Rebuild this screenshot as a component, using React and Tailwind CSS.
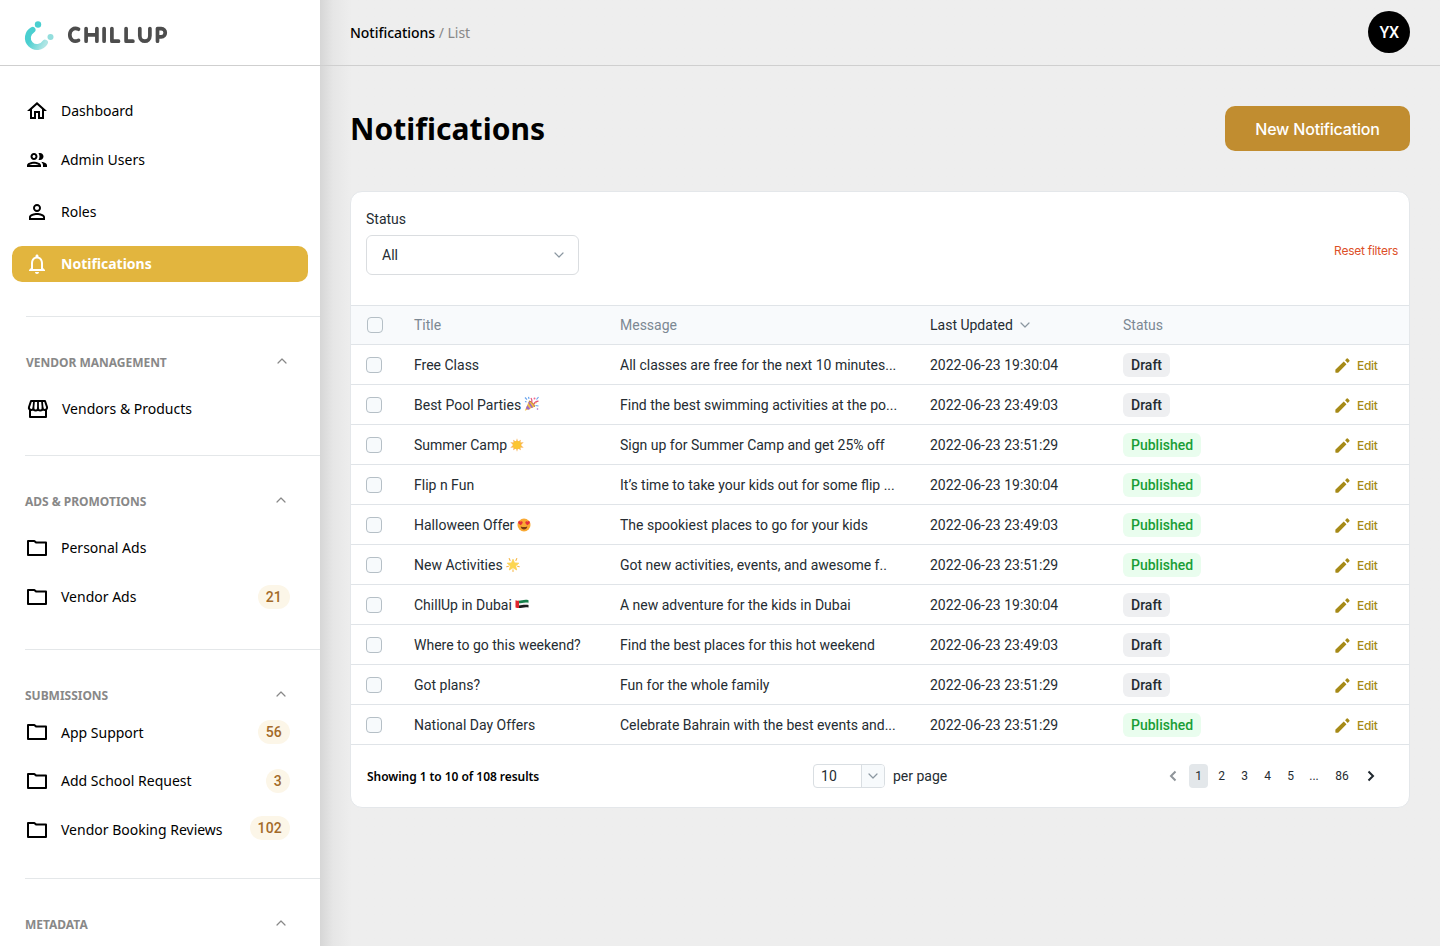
import { MdOutlineHome, MdPersonOutline, MdNotificationsNone } from "react-icons/md";

const sans = "font-['Noto_Sans',sans-serif]";

function Chevron({ up, className }) {
  return (
    <svg viewBox="0 0 10 6" className={className} fill="none" stroke="currentColor" strokeWidth="1.2" strokeLinecap="round" strokeLinejoin="round">
      <path d={up ? "M1 5l4-4 4 4" : "M1 1l4 4 4-4"} />
    </svg>
  );
}

function Group({ className }) {
  return (
    <svg viewBox="0 0 24 24" className={className} fill="currentColor">
      <path d="M9 13.750c-2.340 0-7 1.170-7 3.500V19h14v-1.750c0-2.330-4.660-3.500-7-3.500zM4.340 17c.84-.58 2.870-1.250 4.660-1.250s3.820.67 4.660 1.250H4.340zM9 12c1.930 0 3.500-1.570 3.500-3.500S10.930 5 9 5 5.500 6.570 5.500 8.500 7.070 12 9 12zm0-5c.83 0 1.500.67 1.500 1.500S9.830 10 9 10s-1.500-.67-1.500-1.500S8.170 7 9 7zm7.040 6.810c1.160.84 1.960 1.960 1.960 3.440V19h4v-1.750c0-2.020-3.500-3.170-5.960-3.440zM15 12c1.930 0 3.500-1.570 3.500-3.500S16.930 5 15 5c-.54 0-1.040.13-1.500.35.63.89 1 1.980 1 3.150s-.37 2.260-1 3.150c.46.22.96.35 1.500.35z" />
    </svg>
  );
}

function Folder({ className }) {
  return (
    <svg viewBox="0 0 24 24" className={className} fill="none" stroke="currentColor" strokeWidth="2" strokeLinejoin="round">
      <path d="M3 5h6.300l2 1.600H21V19H3z" />
    </svg>
  );
}

function Storefront({ className }) {
  return (
    <svg viewBox="0 0 24 24" className={className} fill="none" stroke="currentColor" strokeWidth="2" strokeLinejoin="round">
      <path d="M5 4h14l2 6a2.2 2.2 0 0 1-4.4 1.2A2.3 2.3 0 0 1 12 11.2a2.3 2.3 0 0 1-4.6 0A2.2 2.2 0 0 1 3 10z" />
      <path d="M8 4l-.6 7M12 4v7M16 4l.6 7" strokeWidth="1.8" />
      <path d="M4 12.5V20h16v-7.5" />
    </svg>
  );
}

function Pencil() {
  return (
    <svg viewBox="0 0 24 24" className="size-[19px]" fill="currentColor">
      <path d="M3 17.460v3.040c0 .28.22.5.5.5h3.040c.13 0 .26-.05.35-.15L17 10.400l-3.400-3.400L3.150 17.100c-.1.1-.15.22-.15.36zM20.710 6.700a1 1 0 0 0 0-1.410l-2-2a1 1 0 0 0-1.410 0l-2.100 2.100 3.400 3.400 2.110-2.090z" />
    </svg>
  );
}

function Logo() {
  return (
    <svg viewBox="0 0 150 36" className="h-9 w-[150px]">
      <defs>
        <linearGradient id="ring" x1="0" y1="0.3" x2="1" y2="0.8">
          <stop offset="0.2" stopColor="#4acfd0" />
          <stop offset="1" stopColor="#aee5e4" />
        </linearGradient>
      </defs>
      <path d="M12.600 11.800A9.200 9.200 0 1 0 25 24.500" fill="none" stroke="url(#ring)" strokeWidth="5.900" strokeLinecap="round" />
      <circle cx="18" cy="6.500" r="3.200" fill="#4acfd0" />
      <circle cx="30.500" cy="19" r="3" fill="#93dedd" />
      <g fill="none" stroke="#4d4d4d" strokeWidth="3.700" strokeLinecap="round" strokeLinejoin="round">
        <path d="M58.500 11.200C53.500 8.800 49.800 12.300 49.800 16.800S53.500 24.800 58.500 22.400" />
        <path d="M66.100 10.600v12.600M76.900 10.600v12.600M66.100 16.900h10.800M84.100 10.600v12.600M91.900 10.600v12.600h6.600M106.100 10.600v12.600h6.800" />
        <path d="M119.800 10.600v7.200c0 7.200 10.100 7.200 10.100 0v-7.200M137.500 23.200V10.600h3.700c5.400 0 5.400 8.200 0 8.200h-3.500" />
      </g>
    </svg>
  );
}

function NavItem({ icon: Icon, label, count, className, labelClass = "", active }) {
  return (
    <div className={`flex h-9 items-center ${active ? "mx-3 rounded-[10px] bg-[#e2b53e] pl-[13px] font-bold text-white" : "pl-[25px] pr-[30px] text-black"} ${className}`}>
      <Icon className="size-6 shrink-0" />
      <span className={`ml-3 text-sm ${labelClass}`}>{label}</span>
      {count && (
        <span className="ml-auto rounded-full bg-[#fcf6e8] px-2 font-[Roboto] text-sm leading-6 font-medium tracking-[.2px] text-[#a36a28]">{count}</span>
      )}
    </div>
  );
}

function Section({ title, className, children }) {
  return (
    <section className={`shrink-0 ${className}`}>
      <div className="ml-[25px] border-t border-[#e4e7e9]" />
      <div className="mt-[35px] flex h-[21px] items-center justify-between pr-[34px] pl-[25px] text-[#888]">
        <h2 className="text-xs font-bold tracking-[-.02px]">{title}</h2>
        <Chevron up className="mb-[3px] h-[6px] w-[10px]" />
      </div>
      {children}
    </section>
  );
}

function Sidebar() {
  return (
    <aside className={`flex h-full w-[320px] shrink-0 flex-col overflow-hidden bg-white ${sans}`}>
      <div className="h-[66px] shrink-0 border-b border-[#cfcfcf] pt-[18px] pl-5">
        <Logo />
      </div>
      <nav className="h-[250px] shrink-0 pt-[27px]">
        <NavItem icon={MdOutlineHome} label="Dashboard" />
        <NavItem icon={Group} label="Admin Users" className="mt-[13px]" />
        <NavItem icon={MdPersonOutline} label="Roles" className="mt-4" />
        <NavItem icon={MdNotificationsNone} label="Notifications" active className="mt-4" />
      </nav>
      <Section title="VENDOR MANAGEMENT" className="-mr-px h-[139px] pl-px">
        <NavItem icon={Storefront} label="Vendors & Products" className="mt-[18px]" />
      </Section>
      <Section title="ADS & PROMOTIONS" className="h-[194px]">
        <NavItem icon={Folder} label="Personal Ads" className="mt-[18px]" />
        <NavItem icon={Folder} label="Vendor Ads" count="21" className="mt-[13px]" />
      </Section>
      <Section title="SUBMISSIONS" className="h-[229px]">
        <NavItem icon={Folder} label="App Support" count="56" className="mt-2" labelClass="pt-[2px]" />
        <NavItem icon={Folder} label="Add School Request" count="3" className="mt-[13px]" />
        <NavItem icon={Folder} label="Vendor Booking Reviews" count="102" className="mt-[13px] [&>:last-child]:mb-[4px]" />
      </Section>
      <Section title="METADATA" className="h-[68px]" />
    </aside>
  );
}

function Party() {
  return (
    <svg viewBox="0 0 16 16" className="-mt-[2px] size-4">
      <path d="M.8 14.800L5 5c2.500.5 5 3 5.700 5.800z" fill="#f2bd45" />
      <path d="M1.800 12.500l1.500-3.300 3 3.800-1.800.7zM4.300 6.800l.8-1.600 4 6.300-1.600.6z" fill="#a06ac4" />
      <path d="M5 5c2.500.3 5.200 3 5.700 5.800" stroke="#b87a2c" fill="none" />
      <path d="M7.800 6.500c.4-2 .2-3-.8-4.500M9.800 8.200c.8-2 2-2.800 4.700-3" stroke="#e5567d" strokeWidth="1.300" fill="none" />
      <path d="M1 1.500l2 2.200M14.500 1l-2 2.500M11.500 9.500l3 .5M4.500.8l.5 2M1 5.500l1.500.3" stroke="#6aa5ee" strokeWidth="1.200" />
      <circle cx="10.500" cy="2.500" r="1" fill="#ef6c91" />
      <circle cx="13.500" cy="13" r=".8" fill="#a566c9" />
      <circle cx="12" cy="6.800" r=".7" fill="#f0b53a" />
    </svg>
  );
}

function Sun() {
  return (
    <svg viewBox="0 0 14 14" className="size-[14px]">
      <path d="M7 .3l1 3.200L10.900 1.800 10.400 4.600l3.300-.4L11 7l2.700 2.800-3.300-.4.500 2.900L8 10.600 7 13.700l-1-3.100-2.900 1.700.5-2.900-3.300.4L3 7 .3 4.200l3.300.4-.5-2.800L6 3.500z" fill="#f7a83a" opacity=".85" />
      <circle cx="7" cy="7" r="4" fill="#fbc531" />
    </svg>
  );
}

function HeartEyes() {
  return (
    <svg viewBox="0 0 14 14" className="size-[14px]">
      <circle cx="7" cy="7" r="6.500" fill="#f9a933" />
      <path d="M3.700 7.200C1.600 5.900.8 4.800 1.200 3.700 1.700 2.700 3 2.800 3.500 3.700c.8-.7 2-.4 2.200.6.100 1-.8 2-2 2.900zM10.300 7.200C12.400 5.900 13.200 4.800 12.800 3.700c-.5-1-1.800-.9-2.300 0-.8-.7-2-.4-2.200.6-.1 1 .8 2 2 2.900z" fill="#e6303a" />
      <path d="M3.700 8.500c2 .7 4.600.7 6.600 0-.3 4-6.300 4-6.600 0z" fill="#7b3a12" />
    </svg>
  );
}

function GlowingStar() {
  return (
    <svg viewBox="0 0 14 14" className="size-[14px]">
      <path d="M7 1.200l1.500 3.700 4.300.3-3.200 2.700 1.100 4.100L7 9.800l-3.700 2.200 1.100-4.100-3.200-2.700 4.300-.3z" fill="#fdd64e" stroke="#fbd054" strokeWidth=".8" strokeLinejoin="round" />
      <path d="M3.200.6l.9 1.900M10.800.6L9.900 2.500M.7 8.800l1.800-.6M13.300 8.800l-1.800-.6M7 11.800v1.700" stroke="#f6b84c" strokeWidth="1.100" strokeLinecap="round" />
    </svg>
  );
}

function UaeFlag() {
  return (
    <svg viewBox="0 0 14 10" className="-mt-[2px] h-[10px] w-[14px]">
      <path d="M.5 1.200c4 1.400 8-1.200 13 0v7.300c-5-1.200-9 1.400-13 0z" fill="#f3f3f3" />
      <path d="M3.500 1.700c3 .1 6-1.500 10-.5v2.600c-4-1-7 .6-10 .5z" fill="#16804a" />
      <path d="M3.500 6.500c3 .1 6-1.300 10-.4v2.400c-4-1-7 .8-10 .6z" fill="#1c1c1c" />
      <path d="M.5 1.200c1.200.4 2.300.5 3.500.5v7.400c-1.200 0-2.300-.2-3.500-.6z" fill="#e0262f" />
    </svg>
  );
}

const rows = [
  ["Free Class", null, "All classes are free for the next 10 minutes...", "2022-06-23 19:30:04", "Draft"],
  ["Best Pool Parties", Party, "Find the best swimming activities at the po...", "2022-06-23 23:49:03", "Draft"],
  ["Summer Camp", Sun, "Sign up for Summer Camp and get 25% off", "2022-06-23 23:51:29", "Published"],
  ["Flip n Fun", null, "It’s time to take your kids out for some flip ...", "2022-06-23 19:30:04", "Published"],
  ["Halloween Offer", HeartEyes, "The spookiest places to go for your kids", "2022-06-23 23:49:03", "Published"],
  ["New Activities", GlowingStar, "Got new activities, events, and awesome f..", "2022-06-23 23:51:29", "Published"],
  ["ChillUp in Dubai", UaeFlag, "A new adventure for the kids in Dubai", "2022-06-23 19:30:04", "Draft"],
  ["Where to go this weekend?", null, "Find the best places for this hot weekend", "2022-06-23 23:49:03", "Draft"],
  ["Got plans?", null, "Fun for the whole family", "2022-06-23 23:51:29", "Draft"],
  ["National Day Offers", null, "Celebrate Bahrain with the best events and...", "2022-06-23 23:51:29", "Published"],
];

const grid = "grid h-10 grid-cols-[48px_206px_310px_193px_1fr_76px] items-center border-b border-[#e0e4e8] pl-[15px]";

function Checkbox({ className = "" }) {
  return <span className={`block size-4 rounded border border-[#b5bfc6] bg-[#f7fafc] ${className}`} />;
}

function Arrow({ next, className }) {
  return (
    <svg viewBox="0 0 8 12" className={`h-3 w-2 ${className}`} fill="none" stroke="currentColor" strokeWidth="2">
      <path d={next ? "M1.500 1.500L6 6l-4.500 4.500" : "M6.500 1.500L2 6l4.500 4.500"} />
    </svg>
  );
}

function Footer() {
  return (
    <div className="flex h-[62px] items-center">
      <p className={`w-[462px] pt-[2px] pl-4 text-xs font-semibold tracking-[-.05px] text-black ${sans}`}>Showing 1 to 10 of 108 results</p>
      <div className="flex h-6 w-[72px] overflow-hidden rounded border border-[#d9dee2]">
        <span className="w-[47px] pl-[7px] text-sm leading-[22px] tracking-[.2px]">10</span>
        <span className="flex flex-1 items-center justify-center border-l border-[#d9dee2] bg-[#f7fafc] text-[#8b97a1]">
          <Chevron className="h-[6px] w-[10px]" />
        </span>
      </div>
      <span className="ml-2 text-sm">per page</span>
      <div className="mr-[34px] ml-auto flex items-center text-xs">
        <Arrow className="mr-3 text-[#8e9499]" />
        <span className="w-[19px] rounded bg-[#e3e7ea] text-center leading-6">1</span>
        <span className="ml-[2px] w-[23px] text-center">2</span>
        <span className="w-[23px] text-center">3</span>
        <span className="w-[23px] text-center">4</span>
        <span className="w-[23px] text-center">5</span>
        <span className="w-6 text-center">...</span>
        <span className="w-8 text-center">86</span>
        <Arrow next className="ml-[9px] text-[#1f272e]" />
      </div>
    </div>
  );
}

export default function App() {
  return (
    <div className="flex h-[946px] w-[1440px] overflow-hidden bg-[#eee] font-[Roboto,sans-serif] text-[#252c32]">
      <Sidebar />
      <main className="min-w-0 flex-1 bg-linear-to-r from-[#d6d6d6] via-[#e6e6e6] via-[13px] to-[#eee] to-[32px]">
        <header className="flex h-[66px] items-center justify-between border-b border-[#cfcfcf] pr-[30px] pb-px pl-[30px]">
          <div className={`pt-[2px] text-sm tracking-[-.03px] text-[#888] ${sans}`}>
            <span className="font-medium text-black">Notifications</span> / List
          </div>
          <div className="flex size-[42px] items-center justify-center rounded-full bg-black pt-px text-base font-medium tracking-[-.4px] text-white">YX</div>
        </header>
        <div className="mt-10 flex items-center justify-between px-[30px]">
          <h1 className={`text-[30px] leading-[45px] font-bold tracking-[.05px] text-black ${sans}`}>Notifications</h1>
          <button className="h-[45px] w-[185px] rounded-[10px] bg-[#c18d30] font-[Inter] text-base font-medium tracking-[-.18px] text-white">New Notification</button>
        </div>
        <div className="mx-[30px] mt-10 overflow-hidden rounded-xl border border-[#e4e7ea] bg-white">
          <div className="flex h-[113px] items-center justify-between pr-[11px] pl-[15px]">
            <div className="-mt-4">
              <div className="text-sm leading-6">Status</div>
              <div className="mt-1 flex h-10 w-[213px] items-center justify-between rounded-md border border-[#dadde0] pr-[14px] pl-[15px] text-sm">
                <span>All</span>
                <Chevron className="h-[6px] w-[10px] text-[#8b97a1]" />
              </div>
            </div>
            <a className="pt-1 font-[Inter] text-xs tracking-[-.26px] text-[#dd4f28]">Reset filters</a>
          </div>
          <div className={`${grid} border-t bg-[#f8fafc] text-sm text-[#7c8893]`}>
            <Checkbox className="ml-px" />
            <span>Title</span>
            <span>Message</span>
            <span className="flex items-center gap-[7px] text-[#252c32]">Last Updated <Chevron className="h-[6px] w-[10px] text-[#8b97a1]" /></span>
            <span>Status</span>
          </div>
          {rows.map(([title, Emoji, message, date, status]) => (
            <div key={title} className={`${grid} text-sm whitespace-nowrap`}>
              <Checkbox />
              <span className="flex items-center gap-[3px]">{title}{Emoji && <Emoji />}</span>
              <span>{message}</span>
              <span>{date}</span>
              <span>
                <span className={`inline-block rounded-md px-2 leading-6 font-medium ${status === "Draft" ? "bg-[#eeeff1]" : "bg-[#e9fdee] text-[#1a9d36]"}`}>{status}</span>
              </span>
              <span className="flex items-center gap-[5px] pt-[2px] font-[Inter] text-xs font-medium tracking-[-.3px] text-[#a68a17]"><Pencil />Edit</span>
            </div>
          ))}
          <Footer />
        </div>
      </main>
    </div>
  );
}
